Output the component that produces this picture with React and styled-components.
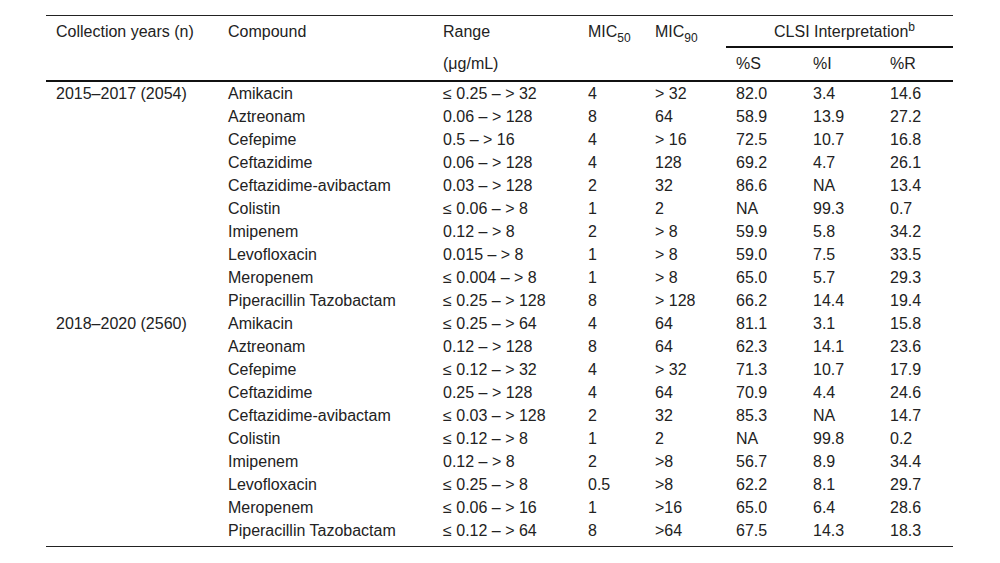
import React from "react";
import styled, { createGlobalStyle } from "styled-components";

const GlobalStyle = createGlobalStyle`
  body {
    margin: 0;
    background: #ffffff;
    color: #222222;
    font-family: "Liberation Sans", Arial, sans-serif;
  }
`;

const groups = [
  {
    label: "2015–2017 (2054)",
    rows: [
      ["Amikacin", "≤ 0.25 – > 32", "4", "> 32", "82.0", "3.4", "14.6"],
      ["Aztreonam", "0.06 – > 128", "8", "64", "58.9", "13.9", "27.2"],
      ["Cefepime", "0.5 – > 16", "4", "> 16", "72.5", "10.7", "16.8"],
      ["Ceftazidime", "0.06 – > 128", "4", "128", "69.2", "4.7", "26.1"],
      ["Ceftazidime-avibactam", "0.03 – > 128", "2", "32", "86.6", "NA", "13.4"],
      ["Colistin", "≤ 0.06 – > 8", "1", "2", "NA", "99.3", "0.7"],
      ["Imipenem", "0.12 – > 8", "2", "> 8", "59.9", "5.8", "34.2"],
      ["Levofloxacin", "0.015 – > 8", "1", "> 8", "59.0", "7.5", "33.5"],
      ["Meropenem", "≤ 0.004 – > 8", "1", "> 8", "65.0", "5.7", "29.3"],
      ["Piperacillin Tazobactam", "≤ 0.25 – > 128", "8", "> 128", "66.2", "14.4", "19.4"],
    ],
  },
  {
    label: "2018–2020 (2560)",
    rows: [
      ["Amikacin", "≤ 0.25 – > 64", "4", "64", "81.1", "3.1", "15.8"],
      ["Aztreonam", "0.12 – > 128", "8", "64", "62.3", "14.1", "23.6"],
      ["Cefepime", "≤ 0.12 – > 32", "4", "> 32", "71.3", "10.7", "17.9"],
      ["Ceftazidime", "0.25 – > 128", "4", "64", "70.9", "4.4", "24.6"],
      ["Ceftazidime-avibactam", "≤ 0.03 – > 128", "2", "32", "85.3", "NA", "14.7"],
      ["Colistin", "≤ 0.12 – > 8", "1", "2", "NA", "99.8", "0.2"],
      ["Imipenem", "0.12 – > 8", "2", ">8", "56.7", "8.9", "34.4"],
      ["Levofloxacin", "≤ 0.25 – > 8", "0.5", ">8", "62.2", "8.1", "29.7"],
      ["Meropenem", "≤ 0.06 – > 16", "1", ">16", "65.0", "6.4", "28.6"],
      ["Piperacillin Tazobactam", "≤ 0.12 – > 64", "8", ">64", "67.5", "14.3", "18.3"],
    ],
  },
];

const widths = [172, 215, 145, 67, 81, 77, 77, 73];

export default function App() {
  const total = groups.reduce((n, g) => n + g.rows.length, 0);
  let index = 0;
  return (
    <>
      <GlobalStyle />
      <Page>
        <Table>
          <colgroup>
            {widths.map((w, i) => (
              <col key={i} style={{ width: w }} />
            ))}
          </colgroup>
          <thead>
            <tr>
              <HeadTop>Collection years (n)</HeadTop>
              <HeadTop>Compound</HeadTop>
              <HeadTop>Range</HeadTop>
              <HeadTop>
                MIC<Sub>50</Sub>
              </HeadTop>
              <HeadTop>
                MIC<Sub>90</Sub>
              </HeadTop>
              <HeadTop colSpan={3} $group>
                CLSI Interpretation<Sup>b</Sup>
              </HeadTop>
            </tr>
            <tr>
              <HeadSub />
              <HeadSub />
              <HeadSub>(μg/mL)</HeadSub>
              <HeadSub />
              <HeadSub />
              <HeadSub>%S</HeadSub>
              <HeadSub>%I</HeadSub>
              <HeadSub>%R</HeadSub>
            </tr>
          </thead>
          <tbody>
            {groups.map((g) =>
              g.rows.map((r, i) => {
                index += 1;
                const last = index === total;
                return (
                  <tr key={g.label + i}>
                    <Cell $last={last}>{i === 0 ? g.label : ""}</Cell>
                    {r.map((v, j) => (
                      <Cell key={j} $last={last}>
                        {v}
                      </Cell>
                    ))}
                  </tr>
                );
              })
            )}
          </tbody>
        </Table>
      </Page>
    </>
  );
}

const Page = styled.div`
  padding: 15px 47px 0 46px;
`;

const Table = styled.table`
  width: 907px;
  table-layout: fixed;
  border-collapse: separate;
  border-spacing: 0;
  font-size: 16px;
  border-bottom: 1px solid #222222;
`;

const HeadTop = styled.th`
  font-weight: normal;
  text-align: ${(p) => (p.$group ? "center" : "left")};
  vertical-align: top;
  line-height: 20px;
  padding: 6px 0 4px 10px;
  border-top: 1px solid #222222;
  border-bottom: ${(p) => (p.$group ? "2px solid #111111" : "0")};
  white-space: nowrap;
`;

const HeadSub = styled.th`
  font-weight: normal;
  text-align: left;
  vertical-align: top;
  line-height: 20px;
  height: 20px;
  padding: 6px 0 6px 10px;
  border-bottom: 2px solid #111111;
  white-space: nowrap;
`;

const Cell = styled.td`
  line-height: 21px;
  padding: 1px 0 ${(p) => (p.$last ? "5px" : "1px")} 10px;
  vertical-align: top;
  white-space: nowrap;
`;

const Sub = styled.sub`
  font-size: 12px;
  vertical-align: -5px;
  line-height: 0;
`;

const Sup = styled.sup`
  font-size: 12px;
  vertical-align: 6px;
  line-height: 0;
`;
